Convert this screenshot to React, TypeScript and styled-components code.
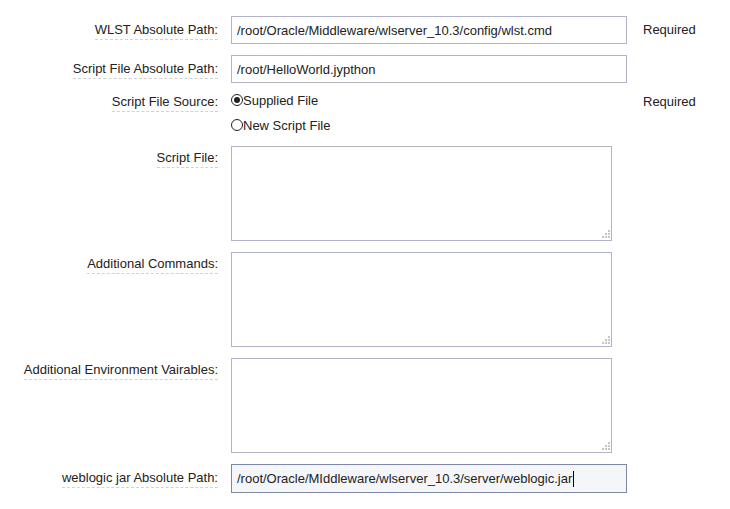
import React from "react";
import styled, { createGlobalStyle } from "styled-components";

interface LabelInterface {
  $top: number;
}
interface FieldInterface {
  label: string;
  top: number;
  children: React.ReactNode;
  note?: string;
}

const GlobalStyle = createGlobalStyle`
  html, body {
    margin: 0;
    background: #ffffff;
  }
  body {
    font-family: "Liberation Sans", Arial, sans-serif;
    font-size: 13px;
    color: #222222;
  }
`;

const FormStyled = styled.div`
  display: grid;
  grid-template-columns: 231px 412px auto;
  row-gap: 11px;
  padding-top: 16px;
  width: 730px;
`;

const LabelCellStyled = styled.div<LabelInterface>`
  justify-self: end;
  align-self: start;
  padding: ${({ $top }) => $top}px 13px 0 0;
`;

const LabelTextStyled = styled.label`
  display: inline-block;
  line-height: 16px;
  padding-bottom: 1px;
  border-bottom: 1px dashed #d2d2d2;
  white-space: nowrap;
`;

const NoteStyled = styled.div<LabelInterface>`
  padding-top: ${({ $top }) => $top}px;
  line-height: 16px;
  color: #222222;
`;

const TextInputStyled = styled.input`
  box-sizing: border-box;
  width: 396px;
  height: 28px;
  margin: 0;
  padding: 0 5px;
  border: 1px solid #b1b4c6;
  background: #ffffff;
  font-family: "Liberation Sans", Arial, sans-serif;
  font-size: 13px;
  color: #222222;
  outline: none;
`;

const FocusedInputStyled = styled.div`
  box-sizing: border-box;
  width: 396px;
  height: 29px;
  padding: 0 5px;
  display: flex;
  align-items: center;
  border: 1px solid #7e87a6;
  background: #f4f6f9;
  color: #222222;
  white-space: nowrap;
`;

const CaretStyled = styled.span`
  display: inline-block;
  width: 1px;
  height: 16px;
  margin-left: 1px;
  background: #000000;
`;

const AreaWrapStyled = styled.div`
  position: relative;
  width: 381px;
  height: 95px;
`;

const TextAreaStyled = styled.textarea`
  box-sizing: border-box;
  display: block;
  width: 100%;
  height: 100%;
  margin: 0;
  padding: 4px 5px;
  border: 1px solid #b1b4c6;
  background: #ffffff;
  resize: none;
  font-family: "Liberation Sans", Arial, sans-serif;
  font-size: 13px;
  outline: none;
`;

const GripStyled = styled.svg`
  position: absolute;
  right: 2px;
  bottom: 2px;
  pointer-events: none;
`;

const RadioGroupStyled = styled.div`
  display: flex;
  flex-direction: column;
  gap: 11px;
  padding-bottom: 2px;
`;

const RadioRowStyled = styled.label`
  display: flex;
  align-items: center;
  height: 14px;
  line-height: 14px;
`;

const RadioDotStyled = styled.span<{ $checked: boolean }>`
  box-sizing: border-box;
  width: 12px;
  height: 12px;
  border-radius: 50%;
  border: 1px solid #222222;
  display: flex;
  align-items: center;
  justify-content: center;
  margin-top: -2px;

  &:after {
    content: "";
    width: 6px;
    height: 6px;
    border-radius: 50%;
    background: ${({ $checked }) => ($checked ? "#222222" : "transparent")};
  }
`;

const Grip = () => (
  <GripStyled width="9" height="9" viewBox="0 0 9 9">
    {[
      [7, 0],
      [7, 3],
      [4, 3],
      [7, 6],
      [4, 6],
      [1, 6],
    ].map(([x, y]) => (
      <rect key={`${x}-${y}`} x={x} y={y} width="2" height="2" fill="#c4c6cf" />
    ))}
  </GripStyled>
);

const TextArea = () => (
  <AreaWrapStyled>
    <TextAreaStyled />
    <Grip />
  </AreaWrapStyled>
);

const Field = ({ label, top, children, note }: FieldInterface) => (
  <>
    <LabelCellStyled $top={top}>
      <LabelTextStyled>{label}</LabelTextStyled>
    </LabelCellStyled>
    <div>{children}</div>
    <NoteStyled $top={top}>{note}</NoteStyled>
  </>
);

const App = () => {
  return (
    <>
      <GlobalStyle />
      <FormStyled>
        <Field label="WLST Absolute Path:" top={6} note="Required">
          <TextInputStyled
            readOnly
            value="/root/Oracle/Middleware/wlserver_10.3/config/wlst.cmd"
          />
        </Field>
        <Field label="Script File Absolute Path:" top={6}>
          <TextInputStyled readOnly value="/root/HelloWorld.jypthon" />
        </Field>
        <Field label="Script File Source:" top={0} note="Required">
          <RadioGroupStyled>
            <RadioRowStyled>
              <RadioDotStyled $checked />
              Supplied File
            </RadioRowStyled>
            <RadioRowStyled>
              <RadioDotStyled $checked={false} />
              New Script File
            </RadioRowStyled>
          </RadioGroupStyled>
        </Field>
        <Field label="Script File:" top={4}>
          <TextArea />
        </Field>
        <Field label="Additional Commands:" top={4}>
          <TextArea />
        </Field>
        <Field label="Additional Environment Vairables:" top={4}>
          <TextArea />
        </Field>
        <Field label="weblogic jar Absolute Path:" top={6}>
          <FocusedInputStyled role="textbox">
            /root/Oracle/MIddleware/wlserver_10.3/server/weblogic.jar
            <CaretStyled />
          </FocusedInputStyled>
        </Field>
      </FormStyled>
    </>
  );
};

export default App;
